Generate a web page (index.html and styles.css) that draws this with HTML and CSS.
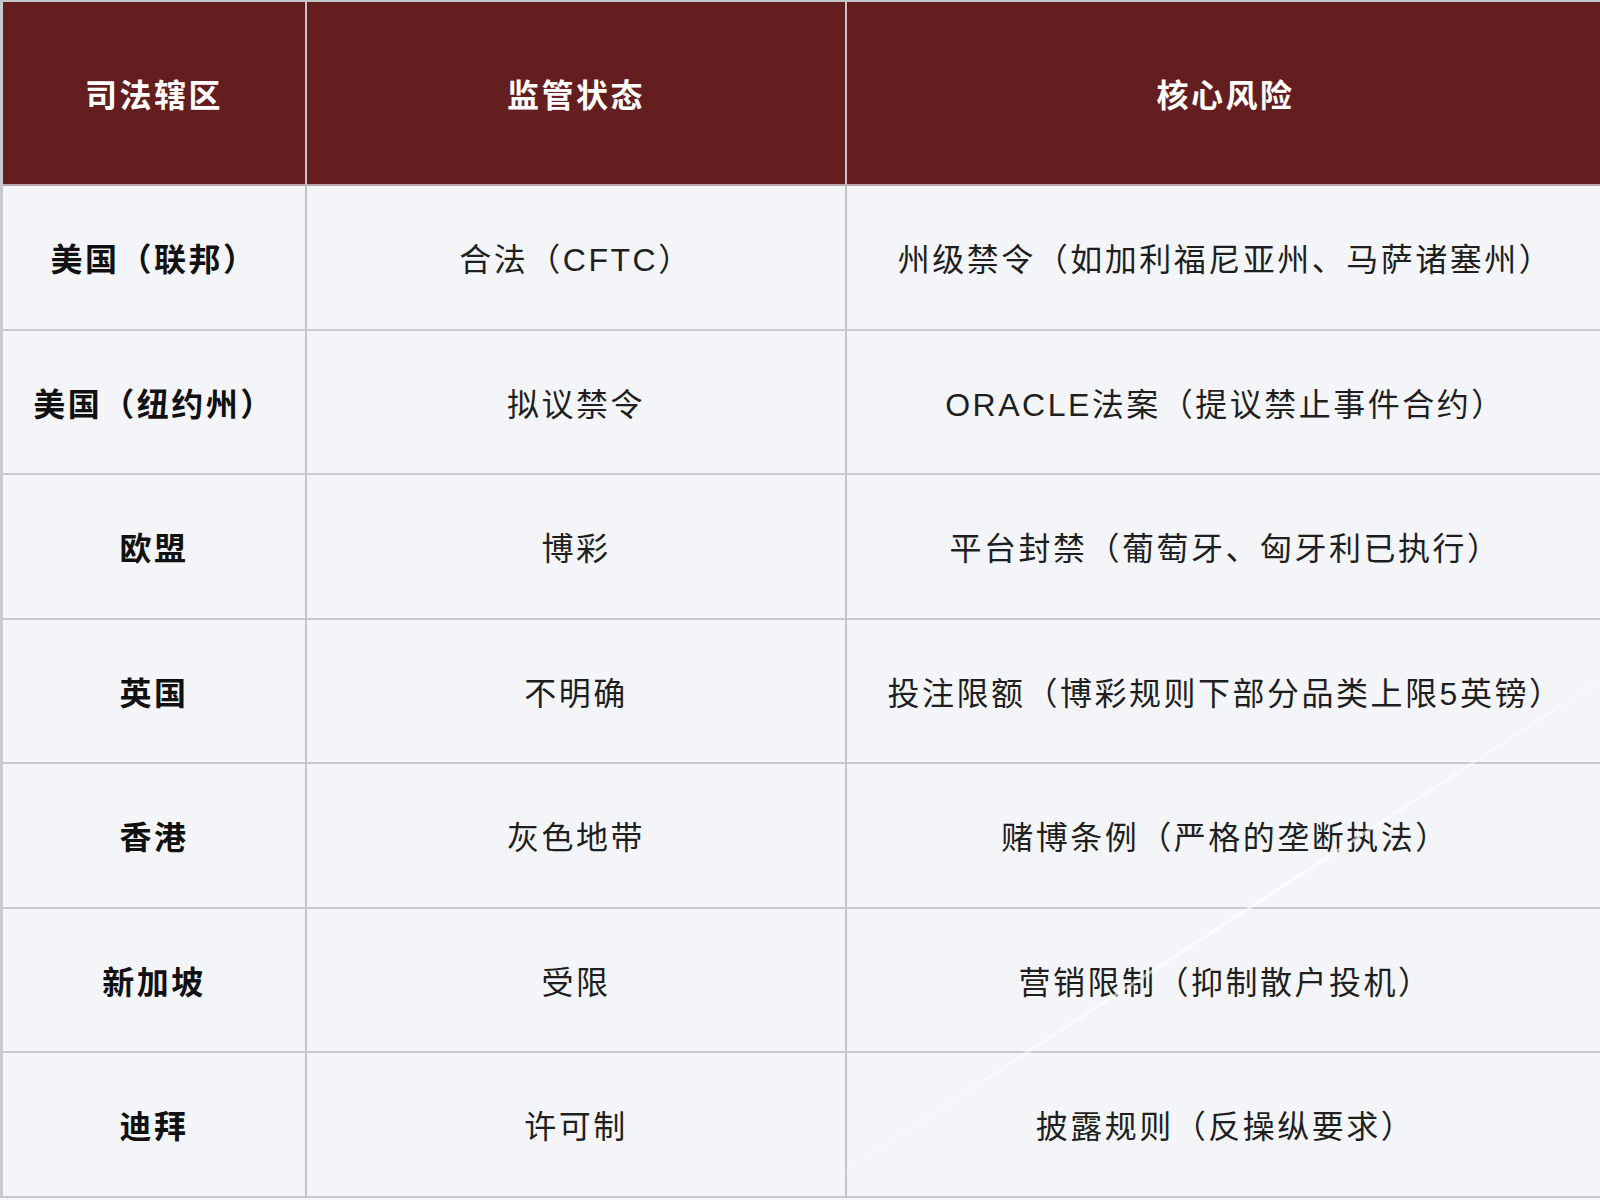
FILE: index.html
```html
<!DOCTYPE html>
<html lang="zh-CN">
<head>
<meta charset="utf-8">
<title>司法辖区监管状态</title>
<link rel="stylesheet" href="styles.css">
</head>
<body>
<div class="frame">
<table class="reg-table">
  <colgroup>
    <col class="c1">
    <col class="c2">
    <col class="c3">
  </colgroup>
  <thead>
    <tr>
      <th>司法辖区</th>
      <th>监管状态</th>
      <th>核心风险</th>
    </tr>
  </thead>
  <tbody>
    <tr><td class="juris">美国（联邦）</td><td>合法（CFTC）</td><td>州级禁令（如加利福尼亚州、马萨诸塞州）</td></tr>
    <tr><td class="juris">美国（纽约州）</td><td>拟议禁令</td><td>ORACLE法案（提议禁止事件合约）</td></tr>
    <tr><td class="juris">欧盟</td><td>博彩</td><td>平台封禁（葡萄牙、匈牙利已执行）</td></tr>
    <tr><td class="juris">英国</td><td>不明确</td><td>投注限额（博彩规则下部分品类上限5英镑）</td></tr>
    <tr><td class="juris">香港</td><td>灰色地带</td><td>赌博条例（严格的垄断执法）</td></tr>
    <tr><td class="juris">新加坡</td><td>受限</td><td>营销限制（抑制散户投机）</td></tr>
    <tr><td class="juris">迪拜</td><td>许可制</td><td>披露规则（反操纵要求）</td></tr>
  </tbody>
</table>
<div class="sheen"></div>
</div>
</body>
</html>
```

FILE: styles.css
```css
html, body {
  margin: 0;
  padding: 0;
  background: #f4f5f9;
  overflow: hidden;
}

.frame {
  position: relative;
  width: 1600px;
  height: 1200px;
  overflow: hidden;
}

.reg-table {
  width: 1604px;
  table-layout: fixed;
  border-collapse: separate;
  border-spacing: 0;
  border-top: 2px solid #c3c4c8;
  border-left: 3px solid #c9cacd;
  font-family: "Liberation Sans", "Noto Sans CJK SC", sans-serif;
  font-size: 32px;
  letter-spacing: 2.5px;
}

.c1 { width: 304px; }
.c2 { width: 540px; }

.reg-table th,
.reg-table td {
  text-align: center;
  vertical-align: middle;
  padding: 0;
  border-right: 2px solid #c3c4c8;
  border-bottom: 2px solid #c9cacd;
  white-space: nowrap;
}

.reg-table th:last-child,
.reg-table td:last-child {
  border-right: none;
}

.reg-table thead tr {
  height: 184px;
}

.reg-table th {
  background: #641e1f;
  color: #ffffff;
  font-weight: bold;
  border-bottom: 2px solid #b9a9aa;
}

.reg-table tbody tr {
  height: 144.5px;
}

.reg-table td {
  background: #f4f5f9;
  color: #1f1f1f;
}

.reg-table td.juris {
  font-weight: bold;
  color: #111111;
}

.sheen {
  position: absolute;
  left: 800px;
  top: 1198px;
  width: 960px;
  height: 3px;
  transform-origin: 0 0;
  transform: rotate(-33deg);
  background: linear-gradient(90deg, rgba(255,255,255,0) 0%, rgba(255,255,255,0.55) 30%, rgba(255,255,255,0.7) 60%, rgba(255,255,255,0.3) 100%);
  pointer-events: none;
}
```
